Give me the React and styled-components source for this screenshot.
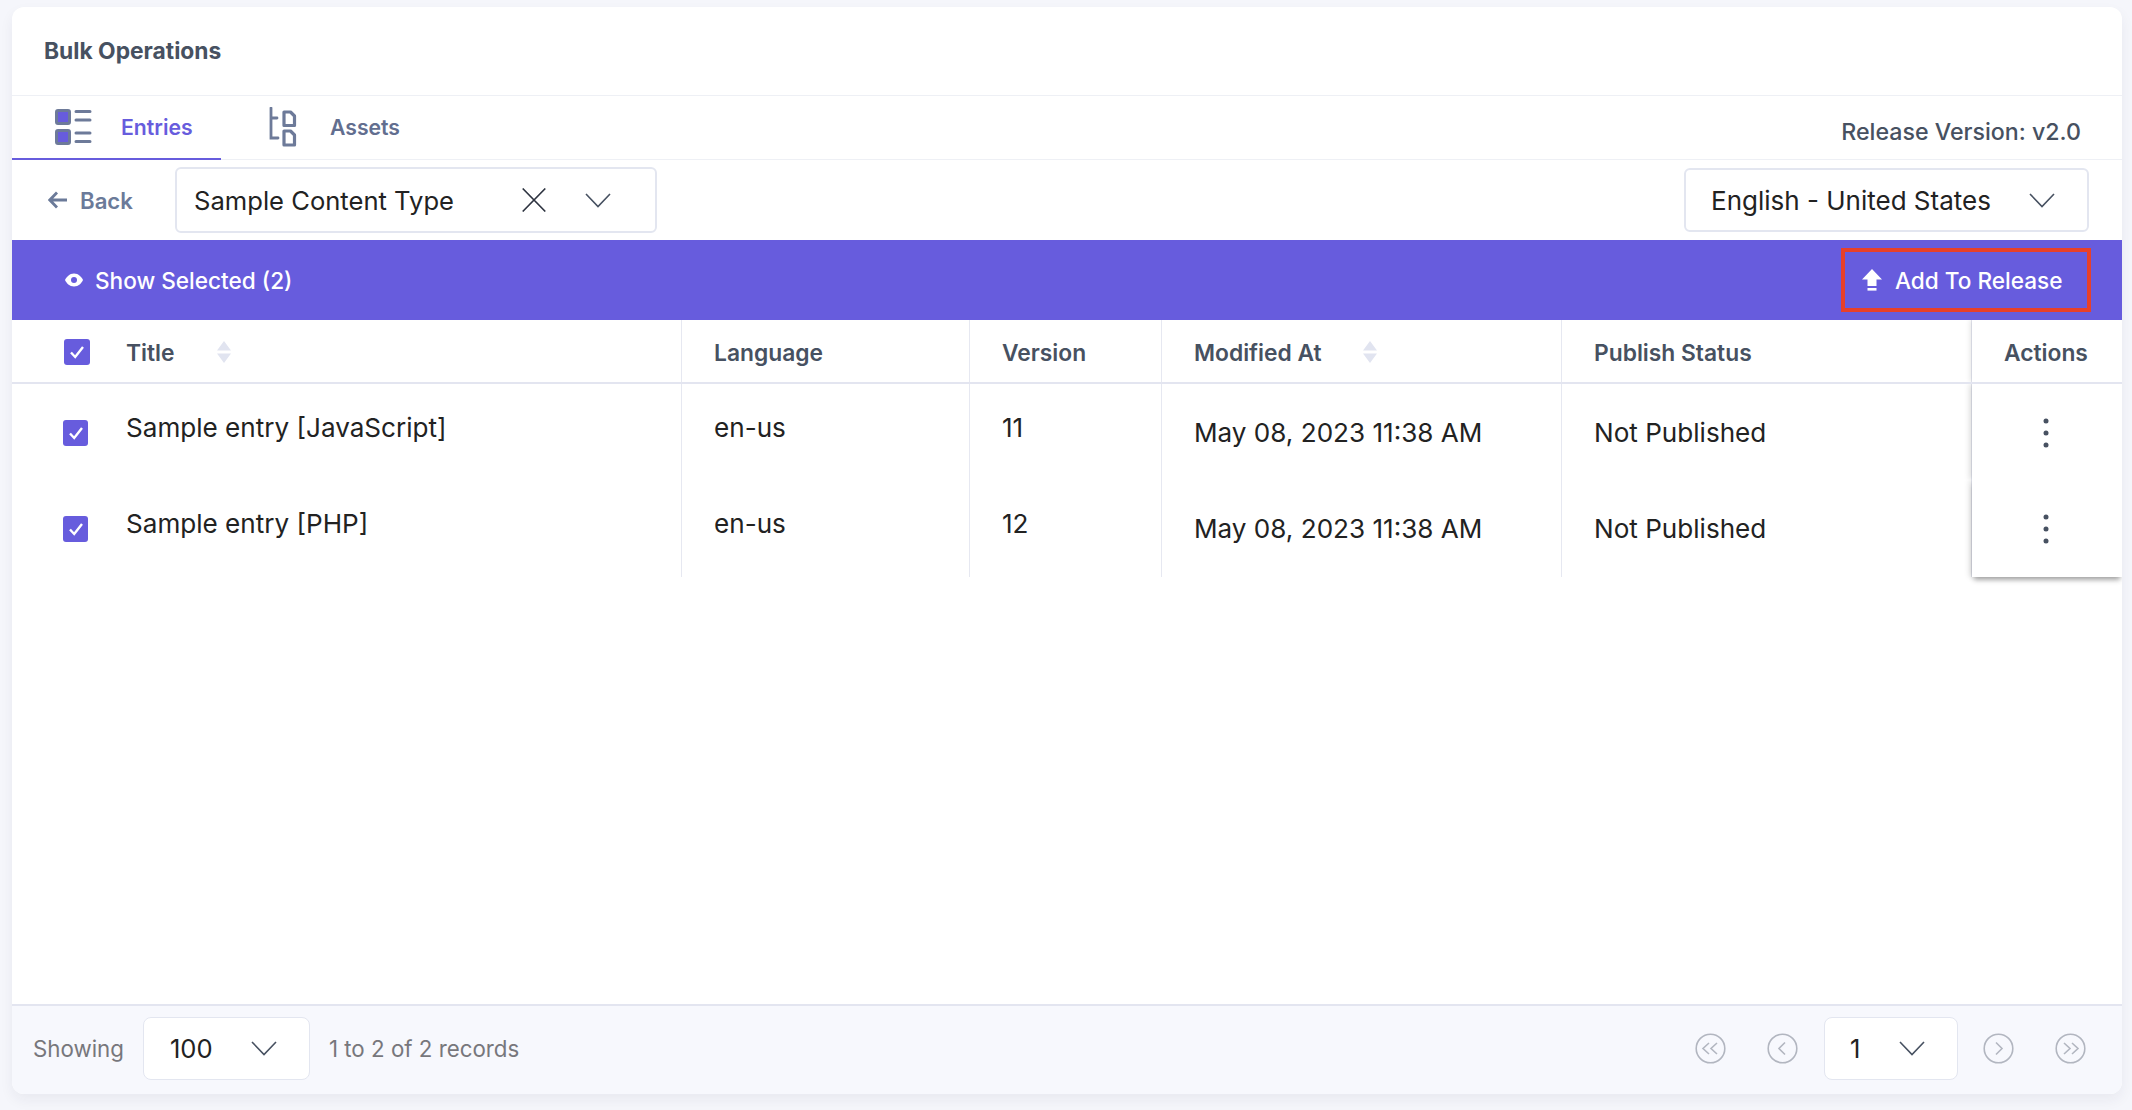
import React from "react";
import styled, { createGlobalStyle } from "styled-components";

const purple = "#675cdd";

const Global = createGlobalStyle`
  html, body { margin: 0; padding: 0; height: 100%; }
  body { background: #f5f6fb; font-family: Inter, "Liberation Sans", sans-serif; color: #222; overflow: hidden; }
`;

const Page = styled.div`
  box-sizing: border-box;
  height: 1110px;
  padding: 7px 10px 16px 12px;
`;

const Card = styled.div`
  height: 100%;
  background: #fff;
  border-radius: 12px;
  box-shadow: 0 6px 14px rgba(30, 35, 60, 0.06);
  display: flex;
  flex-direction: column;
  overflow: hidden;
`;

const CardHead = styled.div`
  box-sizing: border-box;
  height: 89px;
  flex: none;
  display: flex;
  align-items: center;
  padding: 0 0 2px 32px;
  border-bottom: 1px solid #eef0f5;
  font-size: 22.8px;
  font-weight: 700;
  color: #475161;
`;

const TabRow = styled.div`
  box-sizing: border-box;
  height: 64px;
  flex: none;
  display: flex;
  align-items: stretch;
  border-bottom: 1px solid #eef0f5;
`;

const Tab = styled.div`
  width: ${(p) => p.$w}px;
  box-sizing: border-box;
  display: flex;
  align-items: center;
  gap: ${(p) => p.$gap}px;
  padding-left: ${(p) => p.$pad}px;
  font-size: 21.2px;
  font-weight: 600;
  color: ${(p) => (p.$active ? purple : "#626e8f")};
  margin-bottom: -1px;
  border-bottom: 2px solid ${(p) => (p.$active ? purple : "transparent")};
`;

const ReleaseVersion = styled.div`
  margin-left: auto;
  padding: 8px 41px 0 0;
  align-self: center;
  font-size: 23.2px;
  font-weight: 500;
  color: #475161;
`;

const FilterRow = styled.div`
  height: 80px;
  flex: none;
  display: flex;
  align-items: center;
`;

const BackLink = styled.div`
  width: 163px;
  box-sizing: border-box;
  padding-left: 36px;
  flex: none;
  display: flex;
  align-items: center;
  gap: 12px;
  font-size: 22.2px;
  font-weight: 600;
  color: #6b7a99;
`;

const Select = styled.div`
  box-sizing: border-box;
  width: ${(p) => p.$w}px;
  height: ${(p) => p.$h}px;
  flex: none;
  display: flex;
  align-items: center;
  padding-left: ${(p) => p.$pad}px;
  background: #fff;
  border: 2px solid #e3e6f0;
  border-radius: 6px;
  font-size: ${(p) => p.$size || 26}px;
  color: #222;
`;

const SelectIcons = styled.div`
  margin-left: auto;
  padding-right: ${(p) => p.$right}px;
  display: flex;
  align-items: center;
  gap: ${(p) => p.$gap || 0}px;
`;

const LangWrap = styled.div`
  margin-left: auto;
  padding-right: 33px;
`;

const ActionBar = styled.div`
  height: 80px;
  flex: none;
  background: ${purple};
  display: flex;
  align-items: center;
  padding-left: 53px;
  color: #fff;
  font-size: 22.6px;
  font-weight: 500;
  gap: 12px;
`;

const AddButton = styled.div`
  box-sizing: border-box;
  margin-left: auto;
  margin-right: 31px;
  width: 250px;
  height: 64px;
  border: 4px solid #e8402a;
  display: flex;
  align-items: center;
  padding-left: 17px;
  gap: 13px;
`;

const Table = styled.div`
  flex: none;
`;

const Row = styled.div`
  display: grid;
  grid-template-columns: 670px 288px 192px 400px 410px 150px;
  height: ${(p) => p.$h}px;
  box-sizing: border-box;
  ${(p) => p.$head && "border-bottom: 2px solid #e3e5f0;"}
`;

const HeadCell = styled.div`
  display: flex;
  align-items: center;
  padding: 2px 0 0 ${(p) => p.$pad || 32}px;
  gap: ${(p) => p.$gap || 0}px;
  border-right: ${(p) => (p.$last ? "none" : "1px solid #e6e8f1")};
  font-size: 22.8px;
  font-weight: 600;
  color: #475161;
`;

const Cell = styled.div`
  box-sizing: border-box;
  padding: ${(p) => p.$top}px 0 0 ${(p) => p.$pad || 32}px;
  display: flex;
  align-items: flex-start;
  gap: ${(p) => p.$gap || 0}px;
  border-right: 1px solid #e6e8f1;
  font-size: 26.1px;
  line-height: 30px;
  color: #222;
`;

const ActionHead = styled(HeadCell)`
  padding-left: 32px;
  background: #fff;
  box-shadow: -2px 0 5px rgba(0, 0, 0, 0.1);
  clip-path: inset(0 0 0 -12px);
`;

const ActionCell = styled.div`
  background: #fff;
  display: flex;
  justify-content: center;
  align-items: flex-start;
  padding: 34px 2px 0 0;
  box-shadow: -2px 0 6px rgba(0, 0, 0, 0.16)
    ${(p) => p.$last && ", 0 5px 5px -2px rgba(0, 0, 0, 0.3)"};
  clip-path: ${(p) => (p.$last ? "inset(0 0 -14px -12px)" : "inset(0 0 0 -12px)")};
`;

const CheckBox = styled.span`
  width: ${(p) => p.$w}px;
  height: 26px;
  flex: none;
  margin-top: ${(p) => p.$mt || 0}px;
  background: ${purple};
  border-radius: 3px;
  display: flex;
  align-items: center;
  justify-content: center;
`;

const SortWrap = styled.span`
  display: flex;
  margin-left: ${(p) => p.$ml || 0}px;
`;

const Footer = styled.div`
  margin-top: auto;
  height: 90px;
  box-sizing: border-box;
  flex: none;
  background: #f7f8fd;
  border-top: 2px solid #e3e5f0;
  display: flex;
  align-items: center;
  padding: 0 36px 3px 21px;
  font-size: 22.3px;
  color: #77777c;
`;

const ShowSelect = styled(Select)`
  margin: ${(p) => p.$margin};
  border-width: 1.5px;
  border-radius: 8px;
`;

const Pager = styled.div`
  margin-left: auto;
  display: flex;
  align-items: center;
`;

const PageCircle = styled.svg`
  margin-left: ${(p) => p.$ml || 0}px;
`;

const Chevron = ({ w = 26, color = "#475161", sw = 1.6 }) => (
  <svg width={w} height="15" viewBox="0 0 26 15" fill="none">
    <path d="M1 1l12 12.5L25 1" stroke={color} strokeWidth={sw} />
  </svg>
);

const EntriesIcon = () => (
  <svg width="37" height="37" viewBox="0 0 37 37" fill="none">
    <rect x="1.500" y="1.500" width="13" height="13" rx="1.500" fill={purple} stroke="#6d7a99" strokeWidth="3" />
    <rect x="1.500" y="21.500" width="13" height="13" rx="1.500" fill={purple} stroke="#6d7a99" strokeWidth="3" />
    <path d="M21 2.500h14M21 11h14M21 24h14M21 32.500h14" stroke="#6d7a99" strokeWidth="3" strokeLinecap="round" />
  </svg>
);

const AssetsIcon = () => (
  <svg width="28" height="40" viewBox="0 0 28 40" fill="none">
    <path d="M2 1v30h7M2 11h6" stroke="#6d7a99" strokeWidth="2.800" strokeLinecap="round" />
    <path d="M15 5h6.500l4 4v9.500H15zM15 24h6.500l4 4v10H15z" stroke="#6d7a99" strokeWidth="3.200" strokeLinejoin="round" />
  </svg>
);

const BackArrow = () => (
  <svg width="20" height="18" viewBox="0 0 20 18" fill="none">
    <path d="M9 1.500L1.800 9 9 16.500M2 9h17" stroke="#6b7a99" strokeWidth="2.800" />
  </svg>
);

const Cross = () => (
  <svg width="24" height="24" viewBox="0 0 24 24" fill="none">
    <path d="M.7.500l22.600 23M23.300.500L.7 23.500" stroke="#2d3340" strokeWidth="1.600" />
  </svg>
);

const Eye = () => (
  <svg width="18" height="14" viewBox="0 0 18 14">
    <path d="M9 .5C4.500 .5 1.400 4 0 7c1.400 3 4.500 6.500 9 6.500S16.600 10 18 7C16.600 4 13.500 .5 9 .5z" fill="#fff" />
    <circle cx="9" cy="7" r="3" fill={purple} />
  </svg>
);

const UploadArrow = () => (
  <svg width="20" height="22" viewBox="0 0 20 22" fill="#fff">
    <path d="M10 0L20 10.500H14.500V17H5.500V10.500H0z" />
    <rect x="5.500" y="19" width="9" height="2.600" />
  </svg>
);

const Tick = () => (
  <svg width="16" height="14" viewBox="0 0 16 14" fill="none">
    <path d="M2 7.500l4.200 4.500L14 2" stroke="#fff" strokeWidth="2.400" />
  </svg>
);

const SortArrows = () => (
  <svg width="14" height="22" viewBox="0 0 14 22" fill="#e1e4f0">
    <path d="M7 0l7 9.500H0zM7 22L0 12.500h14z" />
  </svg>
);

const Kebab = () => (
  <svg width="6" height="30" viewBox="0 0 6 30" fill="#475161">
    <circle cx="3" cy="3" r="2.500" />
    <circle cx="3" cy="15" r="2.500" />
    <circle cx="3" cy="27" r="2.500" />
  </svg>
);

const PageBtn = ({ dir, double, ml }) => (
  <PageCircle $ml={ml} width="31" height="31" viewBox="0 0 31 31" fill="none">
    <circle cx="15.500" cy="15.500" r="14.300" stroke="#b2b6c0" strokeWidth="1.600" />
    <g transform={dir === "right" ? "translate(31 0) scale(-1 1)" : undefined} stroke="#b2b6c0" strokeWidth="1.600">
      {double ? (
        <path d="M14 10l-6 5.500 6 5.500M22 10l-6 5.500 6 5.500" />
      ) : (
        <path d="M18 9.500l-6 6 6 6" />
      )}
    </g>
  </PageCircle>
);

const rows = [
  { title: "Sample entry [JavaScript]", version: "11" },
  { title: "Sample entry [PHP]", version: "12" },
];

export default function App() {
  return (
    <Page>
      <Global />
      <Card>
        <CardHead>Bulk Operations</CardHead>
        <TabRow>
          <Tab $active $w={209} $pad={43} $gap={29}>
            <EntriesIcon />
            Entries
          </Tab>
          <Tab $w={190} $pad={48} $gap={33}>
            <AssetsIcon />
            Assets
          </Tab>
          <ReleaseVersion>Release Version: v2.0</ReleaseVersion>
        </TabRow>
        <FilterRow>
          <BackLink>
            <BackArrow />
            Back
          </BackLink>
          <Select $w={482} $h={66} $pad={17} $size={25.6}>
            Sample Content Type
            <SelectIcons $right={44} $gap={39}>
              <Cross />
              <Chevron />
            </SelectIcons>
          </Select>
          <LangWrap>
            <Select $w={405} $h={64} $pad={25}>
              English - United States
              <SelectIcons $right={32}>
                <Chevron />
              </SelectIcons>
            </Select>
          </LangWrap>
        </FilterRow>
        <ActionBar>
          <Eye />
          Show Selected (2)
          <AddButton>
            <UploadArrow />
            Add To Release
          </AddButton>
        </ActionBar>
        <Table>
          <Row $head $h={64}>
            <HeadCell $pad={52} $gap={36}>
              <CheckBox $w={26}>
                <Tick />
              </CheckBox>
              Title
              <SortWrap $ml={6}>
                <SortArrows />
              </SortWrap>
            </HeadCell>
            <HeadCell>Language</HeadCell>
            <HeadCell>Version</HeadCell>
            <HeadCell $gap={41}>
              Modified At
              <SortWrap>
                <SortArrows />
              </SortWrap>
            </HeadCell>
            <HeadCell>Publish Status</HeadCell>
            <ActionHead $last>Actions</ActionHead>
          </Row>
          {rows.map((r, i) => (
            <Row key={r.title} $h={i === 0 ? 96 : 97}>
              <Cell $top={29} $pad={51} $gap={38}>
                <CheckBox $w={25} $mt={7}>
                  <Tick />
                </CheckBox>
                {r.title}
              </Cell>
              <Cell $top={29}>en-us</Cell>
              <Cell $top={29}>{r.version}</Cell>
              <Cell $top={34}>May 08, 2023 11:38 AM</Cell>
              <Cell $top={34}>Not Published</Cell>
              <ActionCell $last={i === 1}>
                <Kebab />
              </ActionCell>
            </Row>
          ))}
        </Table>
        <Footer>
          Showing
          <ShowSelect $w={167} $h={63} $pad={26} $size={25.6} $margin="0 19px 0 19px">
            100
            <SelectIcons $right={32}>
              <Chevron />
            </SelectIcons>
          </ShowSelect>
          1 to 2 of 2 records
          <Pager>
            <PageBtn double />
            <PageBtn ml={41} />
            <ShowSelect $w={134} $h={63} $pad={25} $size={25.6} $margin="0 25px 0 26px">
              1
              <SelectIcons $right={32}>
                <Chevron />
              </SelectIcons>
            </ShowSelect>
            <PageBtn dir="right" />
            <PageBtn dir="right" double ml={41} />
          </Pager>
        </Footer>
      </Card>
    </Page>
  );
}
